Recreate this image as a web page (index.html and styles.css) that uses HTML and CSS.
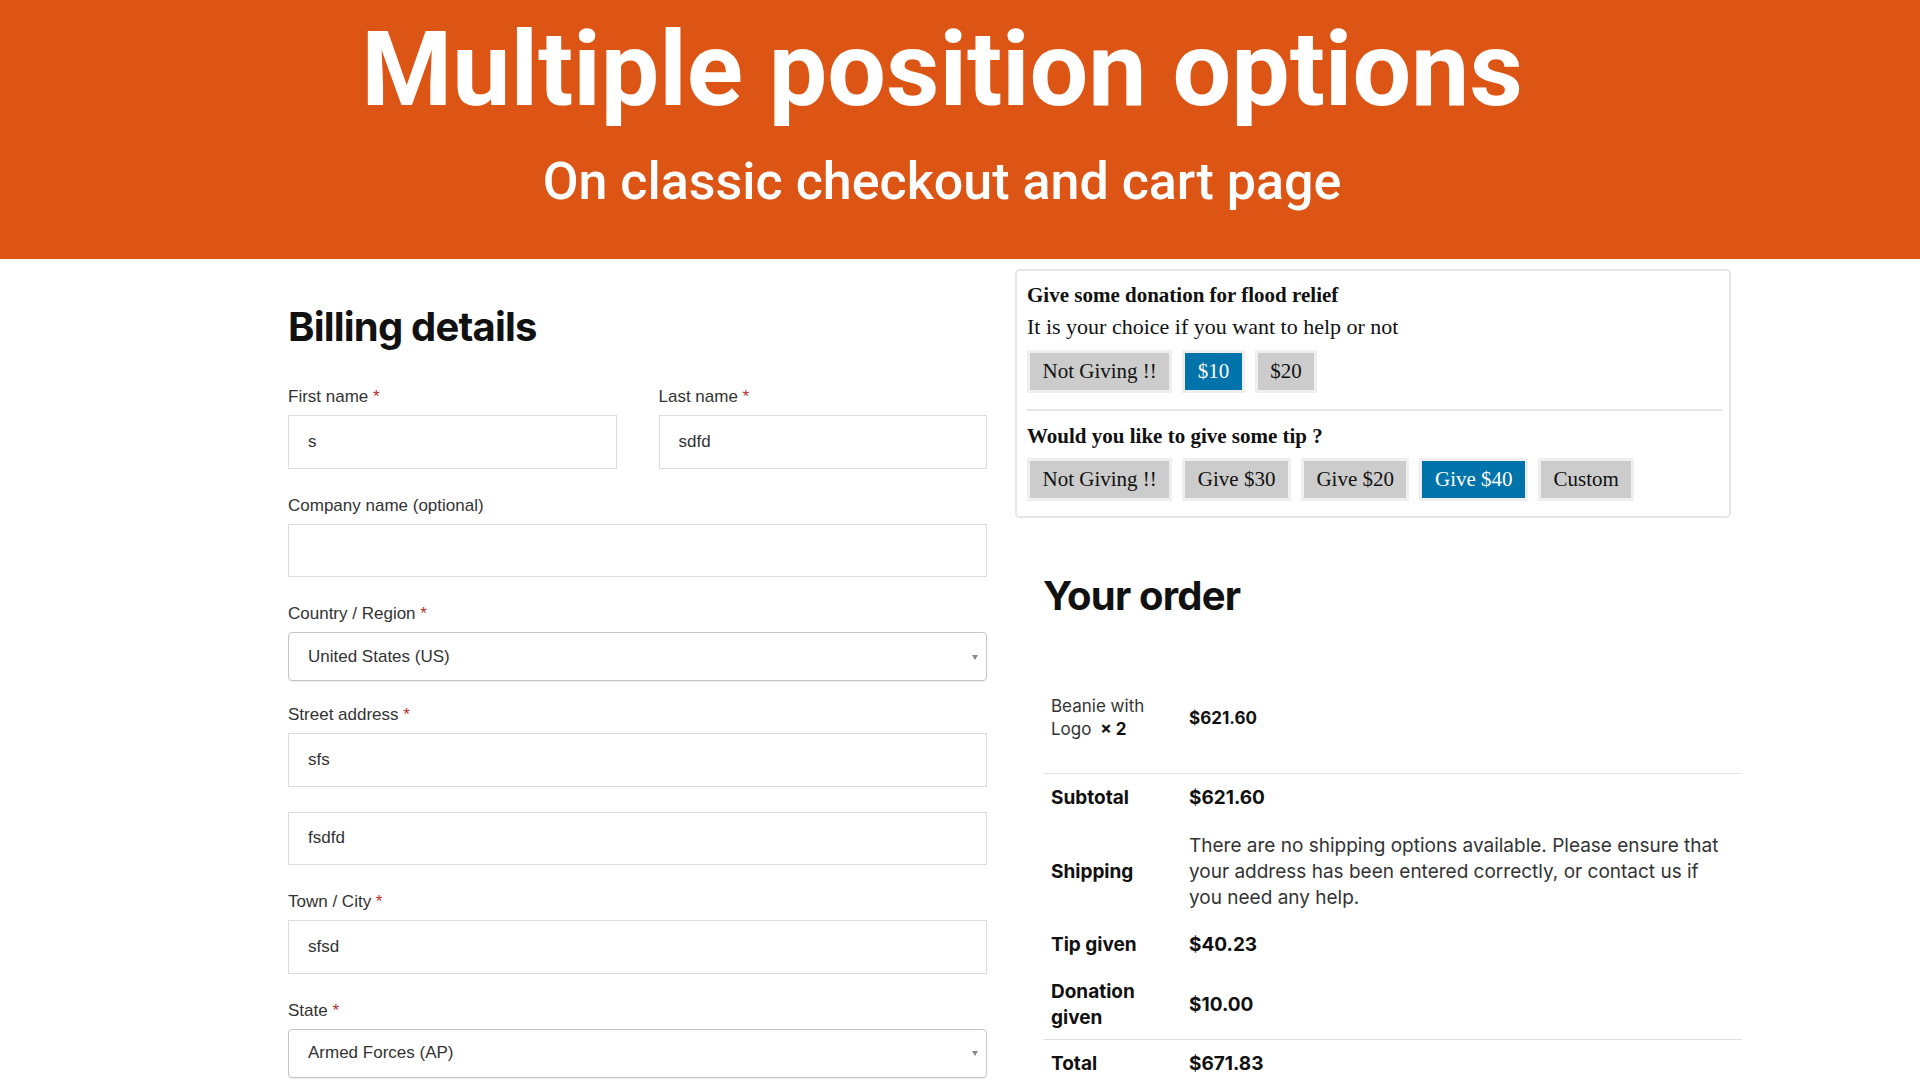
FILE: index.html
```
<!DOCTYPE html>
<html>
<head>
  <title>Multiple position options</title>
  <link rel="stylesheet" href="styles.css">
</head>
<body>

  <header class="banner">
    <h1>Multiple position options</h1>
    <p>On classic checkout and cart page</p>
  </header>

  <main class="checkout">

    <section class="billing">
      <h2>Billing details</h2>

      <div class="field-row">
        <div class="field">
          <label>First name <span class="required">*</span></label>
          <input class="input" type="text" value="s">
        </div>
        <div class="field">
          <label>Last name <span class="required">*</span></label>
          <input class="input" type="text" value="sdfd">
        </div>
      </div>

      <div class="field">
        <label>Company name (optional)</label>
        <input class="input" type="text" value="">
      </div>

      <div class="field field-select">
        <label>Country / Region <span class="required">*</span></label>
        <div class="select">United States (US)</div>
      </div>

      <div class="field">
        <label>Street address <span class="required">*</span></label>
        <input class="input" type="text" value="sfs">
        <input class="input input-second" type="text" value="fsdfd">
      </div>

      <div class="field">
        <label>Town / City <span class="required">*</span></label>
        <input class="input" type="text" value="sfsd">
      </div>

      <div class="field field-select">
        <label>State <span class="required">*</span></label>
        <div class="select">Armed Forces (AP)</div>
      </div>
    </section>

    <section class="side">
      <div class="donation-box">
        <h3>Give some donation for flood relief</h3>
        <p>It is your choice if you want to help or not</p>
        <div class="options">
          <button class="opt">Not Giving !!</button>
          <button class="opt active">$10</button>
          <button class="opt">$20</button>
        </div>

        <hr class="divider">

        <h3 class="tip-title">Would you like to give some tip ?</h3>
        <div class="options">
          <button class="opt">Not Giving !!</button>
          <button class="opt">Give $30</button>
          <button class="opt">Give $20</button>
          <button class="opt active">Give $40</button>
          <button class="opt">Custom</button>
        </div>
      </div>

      <div class="order">
        <h2>Your order</h2>
        <table class="order-table">
          <colgroup>
            <col class="col-label">
            <col>
          </colgroup>
          <tr class="item-row">
            <td class="product">Beanie with<br>Logo <strong class="qty">×&nbsp;2</strong></td>
            <td class="price">$621.60</td>
          </tr>
          <tr>
            <th>Subtotal</th>
            <td class="amount">$621.60</td>
          </tr>
          <tr>
            <th>Shipping</th>
            <td class="note">There are no shipping options available. Please ensure that your address has been entered correctly, or contact us if you need any help.</td>
          </tr>
          <tr>
            <th>Tip given</th>
            <td class="amount">$40.23</td>
          </tr>
          <tr class="last-fee">
            <th>Donation given</th>
            <td class="amount">$10.00</td>
          </tr>
          <tr class="total-row">
            <th>Total</th>
            <td class="amount">$671.83</td>
          </tr>
        </table>
      </div>
    </section>

  </main>

</body>
</html>
```

FILE: styles.css
```
* {
  box-sizing: border-box;
}
body {
  margin: 0;
  height: 1080px;
  overflow: hidden;
  background-color: #fff;
  color: #333;
  font-family: "Liberation Sans", Arial, sans-serif;
}

/* top banner */
.banner {
  height: 259px;
  padding: 18px 36px 0 0;
  background-color: #dd5515;
  color: #fff;
  text-align: center;
  font-family: Roboto, "Open Sans", sans-serif;
}
.banner h1 {
  margin: 0;
  font-size: 104px;
  line-height: 104px;
  font-weight: 700;
}
.banner p {
  margin: 33px 0 0;
  font-size: 52px;
  line-height: 53px;
  font-weight: 500;
}

/* two columns */
.checkout {
  display: grid;
  grid-template-columns: 699px 727px;
  column-gap: 28px;
  padding-left: 288px;
}

.billing {
  padding-top: 44px;
}
.billing h2,
.order h2 {
  margin: 0 0 34px;
  font-family: Inter, "Noto Sans", sans-serif;
  font-size: 40px;
  line-height: 48px;
  font-weight: 700;
  letter-spacing: -0.8px;
  color: #111;
}
.field-row {
  display: flex;
  gap: 42px;
}
.field-row .field {
  flex: 1;
}
.field {
  margin-bottom: 25px;
}
.field-select {
  margin-bottom: 22px;
}
.field label {
  display: block;
  margin-bottom: 6px;
  font-size: 17px;
  line-height: 24px;
  color: #333;
}
.required {
  color: #b5322b;
}
.input {
  display: block;
  width: 100%;
  height: 53.5px;
  padding: 0 19px;
  border: 1px solid #dcdcdc;
  background-color: #fff;
  color: #333;
  font-family: "Liberation Sans", Arial, sans-serif;
  font-size: 17px;
  outline: none;
}
.input-second {
  margin-top: 25px;
}
.select {
  position: relative;
  display: flex;
  align-items: center;
  height: 49px;
  padding: 0 19px;
  border: 1px solid #c4c4c4;
  border-radius: 4px;
  box-shadow: 0 1px 1px rgba(0,0,0,0.08);
  font-size: 17px;
  color: #333;
}
.select::after {
  content: "";
  position: absolute;
  right: 8px;
  top: 50%;
  margin-top: -2px;
  border-left: 3px solid transparent;
  border-right: 3px solid transparent;
  border-top: 5px solid #888;
}

/* right column */
.side {
  padding-top: 10px;
}
.donation-box {
  width: 716px;
  padding: 12px 7px 15px 10px;
  border: 2px solid #e6e6e6;
  border-radius: 5px;
  font-family: "Liberation Serif", "Times New Roman", serif;
  color: #111;
}
.donation-box h3 {
  margin: 0;
  font-size: 21px;
  line-height: 24px;
  font-weight: 700;
}
.donation-box p {
  margin: 8px 0 11px;
  font-size: 22px;
  line-height: 24px;
}
.donation-box .tip-title {
  margin-bottom: 10px;
}
.options {
  display: flex;
  gap: 10px;
}
.opt {
  padding: 6px 12.5px;
  border: 3px solid #efefef;
  background-color: #ccc;
  color: #111;
  font-family: "Liberation Serif", "Times New Roman", serif;
  font-size: 21px;
  line-height: 25px;
  cursor: pointer;
}
.opt.active {
  background-color: #0073aa;
  color: #fff;
}
.divider {
  margin: 16px 0 13px;
  border: none;
  border-top: 2px solid #e6e6e6;
}

.order {
  padding-left: 28px;
}
.order h2 {
  margin: 54px 0 44px;
}
.order-table {
  width: 699px;
  border-collapse: collapse;
  table-layout: fixed;
  font-family: Inter, "Noto Sans", sans-serif;
  color: #111;
}
.col-label {
  width: 138px;
}
.order-table th,
.order-table td {
  padding: 11px 8px 10.5px;
  text-align: left;
  vertical-align: middle;
  font-size: 19px;
  line-height: 26px;
}
.order-table th {
  font-weight: 700;
}
.order-table .amount {
  font-weight: 700;
}
.order-table .note {
  color: #333;
}
.order-table .item-row td {
  padding: 31px 8px 32px;
  font-size: 17px;
  line-height: 23px;
  border-bottom: 1px solid #e2e2e2;
}
.order-table .product {
  color: #333;
}
.qty {
  margin-left: 4px;
  color: #111;
}
.order-table .price {
  font-weight: 700;
}
.order-table .last-fee th,
.order-table .last-fee td {
  padding-top: 10px;
  padding-bottom: 8px;
  border-bottom: 1px solid #e2e2e2;
}
.order-table .total-row th,
.order-table .total-row td {
  padding-top: 11px;
}
```
